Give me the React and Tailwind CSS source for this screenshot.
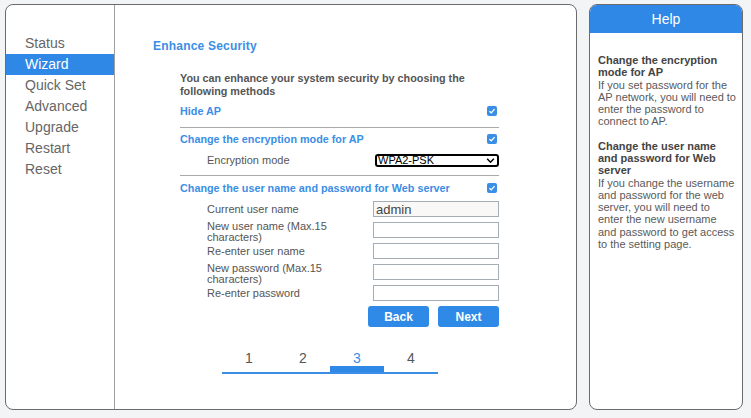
import React from 'react';

const sideItems = ['Status', 'Wizard', 'Quick Set', 'Advanced', 'Upgrade', 'Restart', 'Reset'];

const fields = [
  { label: ['Current user name'], value: 'admin' },
  { label: ['New user name (Max.15', 'characters)'], value: '' },
  { label: ['Re-enter user name'], value: '' },
  { label: ['New password (Max.15', 'characters)'], value: '' },
  { label: ['Re-enter password'], value: '' },
];

function Check() {
  return (
    <span className="mr-[2px] flex h-[10px] w-[10px] items-center justify-center rounded-[2px] bg-[#3b8ee6]">
      <svg viewBox="0 0 10 10" className="h-[8px] w-[8px]">
        <path d="M1.8 5.2 L4.1 7.3 L8.2 2.6" fill="none" stroke="white" strokeWidth="1.7" />
      </svg>
    </span>
  );
}

function Section({ title, height }) {
  return (
    <div className={`flex items-center justify-between ${height}`}>
      <span className="text-[10.8px] font-bold text-[#3b8ee6]">{title}</span>
      <Check />
    </div>
  );
}

export default function App() {
  return (
    <div
      className="flex h-[418px] w-[751px] gap-[12px] bg-[#f2f4f6] pl-[5px] pt-[4px]"
      style={{ fontFamily: '"Liberation Sans", Arial, sans-serif' }}
    >
      {/* main panel */}
      <div className="flex h-[406px] w-[572px] overflow-hidden rounded-[8px] border border-[#6b6b6b] bg-white">
        <div className="w-[109px] border-r border-[#a0a0a0] pt-[28px]">
          {sideItems.map((item) => (
            <div
              key={item}
              className={`h-[21px] pl-[19px] text-[14px] leading-[21px] ${
                item === 'Wizard' ? 'bg-[#2f88e5] text-white' : 'text-[#666]'
              }`}
            >
              {item}
            </div>
          ))}
        </div>

        <div className="flex-1 pl-[38px] pt-[34px]">
          <div className="text-[12px] font-bold leading-[14px] tracking-[0.2px] text-[#3b8ee6]">Enhance Security</div>

          <div className="ml-[27px] mt-[19px] w-[319px]">
            <p className="text-[10.8px] font-bold leading-[13px] text-[#555]">
              You can enhance your system security by choosing the following methods
            </p>
            <div className="mt-[3px]">
              <Section title="Hide AP" height="h-[20px]" />
            </div>
            <div className="mt-[6px] h-px bg-[#aaa]" />
            <Section title="Change the encryption mode for AP" height="h-[22px]" />
            <div className="flex h-[20px] items-center">
              <span className="w-[195px] pl-[27px] text-[11px] text-[#555]">Encryption mode</span>
              <div className="flex h-[13px] w-[124px] items-center justify-between rounded-[3px] border-2 border-black pl-[1px] pr-[2px]">
                <span className="text-[11px] leading-[9px] text-black">WPA2-PSK</span>
                <svg viewBox="0 0 10 6" className="h-[5px] w-[9px]">
                  <path d="M1 1 L5 5 L9 1" fill="none" stroke="black" strokeWidth="1.8" />
                </svg>
              </div>
            </div>
            <div className="mt-[5px] h-px bg-[#aaa]" />
            <Section title="Change the user name and password for Web server" height="h-[24px]" />

            <div className="mt-[1px] flex flex-col gap-[5px]">
              {fields.map((f) => (
                <div key={f.label[0]} className="flex h-[16px]">
                  {f.label.length > 1 ? (
                    <div className="mt-[-1px] w-[193px] pl-[27px] text-[11px] leading-[11px] text-[#555]">
                      {f.label[0]}
                      <br />
                      {f.label[1]}
                    </div>
                  ) : (
                    <div className="w-[193px] pl-[27px] text-[11px] leading-[17px] text-[#555]">{f.label[0]}</div>
                  )}
                  <input
                    readOnly
                    value={f.value}
                    className={`h-[16px] w-[126px] border border-[#a4acb5] px-[2px] text-[13px] leading-[14px] text-[#444] outline-none ${
                      f.value ? 'bg-[#faf8f6]' : 'bg-white'
                    }`}
                  />
                </div>
              ))}
            </div>

            <div className="mt-[5px] flex justify-end gap-[9px]">
              <button className="h-[21px] w-[61px] rounded-[3px] bg-[#2f89e6] text-[12px] font-bold text-white">Back</button>
              <button className="h-[21px] w-[61px] rounded-[3px] bg-[#2f89e6] text-[12px] font-bold text-white">Next</button>
            </div>

            <div className="ml-[42px] mt-[23px] flex w-[216px] border-b-2 border-[#3b8ee6]">
              {[1, 2, 3, 4].map((n) => (
                <div key={n} className="w-[54px]">
                  <div className={`h-[16px] text-center text-[14px] leading-[16px] ${n === 3 ? 'text-[#3b8ee6]' : 'text-[#555]'}`}>
                    {n}
                  </div>
                  <div className={`h-[6px] ${n === 3 ? 'bg-[#2f88e5]' : ''}`} />
                </div>
              ))}
            </div>
          </div>
        </div>
      </div>

      {/* help panel */}
      <div className="h-[406px] w-[154px] overflow-hidden rounded-[8px] border border-[#6b6b6b] bg-white">
        <div className="flex h-[28px] items-center justify-center bg-[#2f88e5] text-[14px] text-white">Help</div>
        <div className="pl-[8px] pr-[4px] pt-[21px] text-[11px] leading-[12.25px] text-[#5a5a5a]">
          <p>
            <span className="font-bold text-[#444]">
              Change the encryption
              <br />
              mode for AP
            </span>
            <br />
            If you set password for the
            <br />
            AP network, you will need to
            <br />
            enter the password to
            <br />
            connect to AP.
          </p>
          <p className="mt-[12.25px]">
            <span className="font-bold text-[#444]">
              Change the user name
              <br />
              and password for Web
              <br />
              server
            </span>
            <br />
            If you change the username
            <br />
            and password for the web
            <br />
            server, you will need to
            <br />
            enter the new username
            <br />
            and password to get access
            <br />
            to the setting page.
          </p>
        </div>
      </div>
    </div>
  );
}
